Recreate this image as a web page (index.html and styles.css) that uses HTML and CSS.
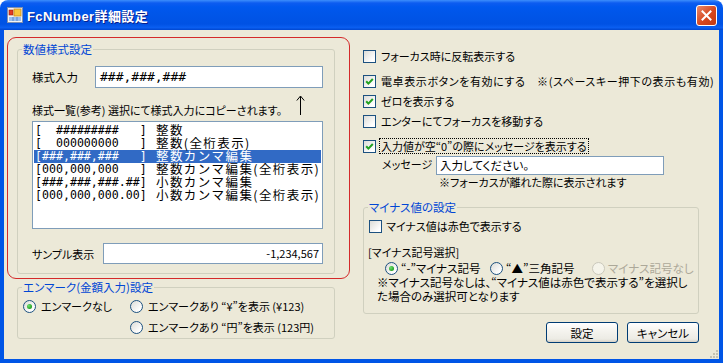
FILE: index.html
```html
<!DOCTYPE html>
<html lang="ja">
<head>
  <meta charset="UTF-8" />
  <title>FcNumber詳細設定</title>
  <link rel="stylesheet" href="styles.css">
</head>
<body>
  <div class="window">
    <div class="titlebar">
      <svg class="app-icon" width="16" height="16" viewBox="0 0 16 16">
        <rect x="0.5" y="0.5" width="15" height="15" fill="#f4f4f4" stroke="#7f8fb0"/>
        <rect x="2" y="3" width="4" height="5" fill="#e23a22" stroke="#9a1c10" stroke-width="0.6"/>
        <rect x="7" y="2" width="7" height="7" fill="#f9c63c" stroke="#c88a18" stroke-width="0.8"/>
        <rect x="2" y="10" width="12" height="4" fill="#9cc0ef"/>
        <line x1="6" y1="10" x2="6" y2="14" stroke="#5b86c9"/>
        <line x1="10" y1="10" x2="10" y2="14" stroke="#5b86c9"/>
      </svg>
      <span class="title">FcNumber詳細設定</span>
      <span class="close-btn">
        <svg width="11" height="11" viewBox="0 0 11 11">
          <path d="M1.5 1.5 L9.5 9.5 M9.5 1.5 L1.5 9.5" stroke="#fff" stroke-width="2" stroke-linecap="square"/>
        </svg>
      </span>
    </div>

    <div class="frame">
      <div class="client">
        <div class="col-left">
          <div class="highlight">
            <fieldset class="group format-group">
              <legend>数値様式設定</legend>
              <div class="format-body">
                <div class="field-row input-row">
                  <span class="label format-label">様式入力</span>
                  <div class="textbox format-input">###,###,###</div>
                </div>
                <div class="hint-row">
                  <span class="label">様式一覧(参考) 選択にて様式入力にコピーされます。</span>
                  <svg class="up-arrow" width="9" height="21" viewBox="0 0 9 21">
                    <path d="M4.5 1.5 V20" stroke="#000" stroke-width="1"/>
                    <path d="M0.8 5.5 L4.5 1 L8.2 5.5" stroke="#000" stroke-width="1" fill="none"/>
                  </svg>
                </div>
                <div class="listbox">
                  <div class="list-item"><span class="fmt">[  #########   ]</span><span class="desc">整数</span></div>
                  <div class="list-item"><span class="fmt">[  000000000   ]</span><span class="desc">整数(全桁表示)</span></div>
                  <div class="list-item selected"><span class="fmt">[###,###,###   ]</span><span class="desc">整数カンマ編集</span></div>
                  <div class="list-item"><span class="fmt">[000,000,000   ]</span><span class="desc">整数カンマ編集(全桁表示)</span></div>
                  <div class="list-item"><span class="fmt">[###,###,###.##]</span><span class="desc">小数カンマ編集</span></div>
                  <div class="list-item"><span class="fmt">[000,000,000.00]</span><span class="desc">小数カンマ編集(全桁表示)</span></div>
                </div>
                <div class="field-row sample-row">
                  <span class="label sample-label">サンプル表示</span>
                  <div class="textbox sample-box">-1,234,567</div>
                </div>
              </div>
            </fieldset>
          </div>

          <fieldset class="group yen-group">
            <legend>エンマーク(金額入力)設定</legend>
            <div class="yen-body">
              <div class="yen-row">
                <label class="radio-row"><span class="rb on"></span><span class="label">エンマークなし</span></label>
                <label class="radio-row"><span class="rb"></span><span class="label">エンマークあり “¥”を表示 (¥123)</span></label>
              </div>
              <div class="yen-row second">
                <span></span>
                <label class="radio-row"><span class="rb"></span><span class="label">エンマークあり “円”を表示 (123円)</span></label>
              </div>
            </div>
          </fieldset>
        </div>

        <div class="col-right">
          <label class="check-row row-1"><span class="cb"></span><span class="label">フォーカス時に反転表示する</span></label>
          <label class="check-row row-2"><span class="cb"><svg width="9" height="9" viewBox="0 0 9 9"><path d="M1.2 4.2 L3.4 6.6 L7.8 2" stroke="#21a121" stroke-width="2" fill="none"/></svg></span><span class="label">電卓表示ボタンを有効にする　※(スペースキー押下の表示も有効)</span></label>
          <label class="check-row row-3"><span class="cb"><svg width="9" height="9" viewBox="0 0 9 9"><path d="M1.2 4.2 L3.4 6.6 L7.8 2" stroke="#21a121" stroke-width="2" fill="none"/></svg></span><span class="label">ゼロを表示する</span></label>
          <label class="check-row row-4"><span class="cb"></span><span class="label">エンターにてフォーカスを移動する</span></label>
          <label class="check-row row-5"><span class="cb"><svg width="9" height="9" viewBox="0 0 9 9"><path d="M1.2 4.2 L3.4 6.6 L7.8 2" stroke="#21a121" stroke-width="2" fill="none"/></svg></span><span class="label focused">入力値が空“0”の際にメッセージを表示する</span></label>

          <div class="message-row">
            <span class="label message-label">メッセージ</span>
            <div class="textbox message-box">入力してください。</div>
          </div>
          <div class="label message-note">※フォーカスが離れた際に表示されます</div>

          <fieldset class="group minus-group">
            <legend>マイナス値の設定</legend>
            <div class="minus-body">
              <label class="check-row minus-check"><span class="cb"></span><span class="label">マイナス値は赤色で表示する</span></label>
              <div class="label minus-title">[マイナス記号選択]</div>
              <div class="minus-radios">
                <label class="radio-row r-1"><span class="rb on"></span><span class="label">“-”マイナス記号</span></label>
                <label class="radio-row r-2"><span class="rb"></span><span class="label">“▲”三角記号</span></label>
                <label class="radio-row r-3 disabled"><span class="rb"></span><span class="label">マイナス記号なし</span></label>
              </div>
              <div class="label minus-note">※マイナス記号なしは、“マイナス値は赤色で表示する”を選択し<br>た場合のみ選択可となります</div>
            </div>
          </fieldset>

          <div class="buttons">
            <span class="btn">設定</span>
            <span class="btn">キャンセル</span>
          </div>
        </div>

        <svg class="grip" width="10" height="10" viewBox="0 0 10 10">
          <rect x="8" y="2" width="2" height="2" fill="#c5c2b2"/>
          <rect x="5" y="5" width="2" height="2" fill="#c5c2b2"/>
          <rect x="8" y="5" width="2" height="2" fill="#c5c2b2"/>
          <rect x="2" y="8" width="2" height="2" fill="#c5c2b2"/>
          <rect x="5" y="8" width="2" height="2" fill="#c5c2b2"/>
          <rect x="8" y="8" width="2" height="2" fill="#c5c2b2"/>
        </svg>
      </div>
    </div>
  </div>
</body>
</html>
```

FILE: styles.css
```css
body {
  margin: 0;
  background: #ffffff;
  font-family: "Noto Sans CJK JP", sans-serif;
  font-size: 11px;
  color: #000000;
}

.window {
  width: 723px;
  height: 363px;
  display: flex;
  flex-direction: column;
}

/* title bar */
.titlebar {
  height: 30px;
  flex: none;
  display: flex;
  align-items: center;
  border-radius: 8px 8px 0 0;
  background: linear-gradient(to bottom, #3c8efc 0, #0d5cf0 3px, #0058ee 7px, #0055e8 50%, #0052e4 80%, #0a5ef0 92%, #0046cf 100%);
}

.app-icon {
  margin-left: 7px;
  flex: none;
}

.title {
  margin-left: 4px;
  font-family: "Liberation Sans", "Noto Sans CJK JP", sans-serif;
  font-size: 13px;
  font-weight: bold;
  letter-spacing: 0.4px;
  color: #ffffff;
  text-shadow: 1px 1px 0 #0a1e8a;
}

.close-btn {
  margin-left: auto;
  margin-right: 6px;
  width: 21px;
  height: 21px;
  box-sizing: border-box;
  border: 1px solid #ffffff;
  border-radius: 3px;
  background: linear-gradient(to bottom right, #e9896b, #d6471e 55%, #c23a12);
  display: flex;
  align-items: center;
  justify-content: center;
}

/* frame */
.frame {
  flex: 1;
  border: 4px solid #0055e6;
  border-top: none;
  box-shadow: inset 1px 0 0 #0a3fc0, inset -1px 0 0 #0a3fc0;
  display: flex;
}

.client {
  flex: 1;
  background: #ece9d8;
  display: flex;
  padding-left: 3px;
  position: relative;
}

.label {
  font-size: 11px;
  line-height: 14px;
  font-feature-settings: "palt";
  white-space: nowrap;
}

/* group boxes */
.group {
  margin: 0;
  padding: 0;
  border: 1px solid #d0d0bf;
  border-radius: 3px;
  min-width: 0;
  box-sizing: border-box;
}

.group legend {
  margin-left: 4px;
  padding: 0 1px;
  font-size: 11.5px;
  line-height: 14px;
  color: #0046d5;
  font-feature-settings: "palt";
}

.textbox {
  box-sizing: border-box;
  border: 1px solid #7f9db9;
  background: #ffffff;
  white-space: pre;
}

/* left column */
.col-left {
  width: 343px;
  flex: none;
}

.highlight {
  margin-top: 7px;
  width: 343px;
  box-sizing: border-box;
  border: 1px solid #d42a2a;
  border-radius: 9px;
  padding: 4px 0 4px 9px;
}

.format-group {
  width: 318px;
}

.format-body {
  padding: 0 0 9px 14px;
}

.field-row {
  display: flex;
  align-items: center;
}

.input-row {
  margin-top: 10px;
}

.format-label {
  width: 63px;
  font-size: 11.5px;
}

.format-input {
  width: 228px;
  height: 22px;
  padding: 1px 0 0 4px;
  font-family: "DejaVu Sans Mono", monospace;
  font-size: 13px;
  line-height: 18px;
}

.hint-row {
  margin-top: 8px;
  height: 21px;
  display: flex;
  align-items: flex-end;
}

.up-arrow {
  margin-left: 14px;
  margin-bottom: 1px;
}

.listbox {
  margin-top: 4px;
  width: 291px;
  height: 108px;
  box-sizing: border-box;
  border: 1px solid #7f9db9;
  background: #ffffff;
  padding: 1px;
  overflow: hidden;
}

.list-item {
  display: flex;
  height: 13px;
  padding-left: 1px;
  white-space: pre;
}

.list-item:first-child {
  margin-top: 1px;
}

.list-item .fmt {
  width: 121px;
  flex: none;
  height: 13px;
  font-family: "DejaVu Sans Mono", monospace;
  font-size: 11.6px;
  line-height: 13px;
}

.list-item .desc {
  height: 13px;
  font-size: 12.5px;
  line-height: 13px;
  letter-spacing: 1.4px;
  position: relative;
  top: -1px;
}

.list-item.selected {
  background: #316ac5;
  color: #ffffff;
}

.sample-row {
  margin-top: 14px;
}

.sample-label {
  width: 71px;
}

.sample-box {
  width: 220px;
  height: 21px;
  padding-right: 3px;
  text-align: right;
  font-size: 11px;
  line-height: 19px;
}

.yen-group {
  margin-top: 1px;
  margin-left: 10px;
  width: 318px;
}

.yen-body {
  padding: 0 0 3px 5px;
}

.yen-row {
  margin-top: 4px;
  display: grid;
  grid-template-columns: 107px auto;
}

.yen-row.second {
  margin-top: 5px;
}

.radio-row {
  display: flex;
  align-items: center;
  height: 16px;
  gap: 5px;
}

.rb {
  width: 13px;
  height: 13px;
  box-sizing: border-box;
  border: 1px solid #1c5180;
  border-radius: 50%;
  background: linear-gradient(135deg, #dcdcd7, #ffffff 80%);
  flex: none;
  display: flex;
  align-items: center;
  justify-content: center;
}

.rb.on::after {
  content: "";
  width: 5px;
  height: 5px;
  border-radius: 50%;
  background: radial-gradient(circle at 35% 35%, #6fe06f, #21a121 70%);
}

.disabled .rb {
  border-color: #cac8bb;
  background: #f5f4ea;
}

.disabled .label {
  color: #aca899;
}

/* right column */
.col-right {
  margin-left: 13px;
  width: 336px;
  flex: none;
}

.check-row {
  display: flex;
  align-items: center;
  height: 16px;
  gap: 5px;
}

.row-1 { margin-top: 18px; }
.row-2 { margin-top: 9px; }
.row-3 { margin-top: 4px; }
.row-4 { margin-top: 4px; }
.row-5 { margin-top: 9px; }

.row-2 .label {
  letter-spacing: 0.6px;
}

.cb {
  width: 13px;
  height: 13px;
  box-sizing: border-box;
  border: 1px solid #1c5180;
  background: linear-gradient(135deg, #dcdcd7, #ffffff 80%);
  flex: none;
  display: flex;
  align-items: center;
  justify-content: center;
}

.focused {
  outline: 1px dotted #000000;
  outline-offset: 0;
  padding: 0 1px;
  margin-left: -1px;
}

.message-row {
  margin-top: 2px;
  display: flex;
  align-items: center;
  padding-left: 19px;
}

.message-label {
  width: 54px;
  margin-top: -3px;
}

.message-box {
  width: 228px;
  height: 19px;
  padding-left: 3px;
  font-size: 11.5px;
  line-height: 17px;
  font-feature-settings: "palt";
}

.message-note {
  padding-left: 76px;
}

.minus-group {
  margin-top: 11px;
  width: 336px;
}

.minus-body {
  padding: 0 0 10px 4px;
}

.minus-check {
  margin-top: 4px;
  margin-left: 1px;
  gap: 4px;
}

.minus-title {
  margin-top: 11px;
}

.minus-radios {
  margin-top: 2px;
  margin-left: 17px;
  display: flex;
}

.minus-radios .radio-row {
  height: 14px;
  gap: 3px;
}

.minus-radios .label {
  font-size: 11.5px;
}

.r-1 { width: 105px; }
.r-2 { width: 102px; }

.minus-note {
  margin-left: 9px;
  font-size: 11.5px;
  line-height: 14px;
}

.buttons {
  margin-top: 8px;
  display: flex;
  justify-content: flex-end;
  gap: 9px;
}

.btn {
  width: 72px;
  height: 21px;
  box-sizing: border-box;
  border: 1px solid #003c74;
  border-radius: 3px;
  background: linear-gradient(to bottom, #ffffff 0, #f5f4ef 40%, #ecebe4 85%, #d6d0c5 100%);
  display: flex;
  align-items: center;
  justify-content: center;
  font-size: 11.5px;
  font-feature-settings: "palt";
}

.grip {
  position: absolute;
  right: 1px;
  bottom: 1px;
}
```
